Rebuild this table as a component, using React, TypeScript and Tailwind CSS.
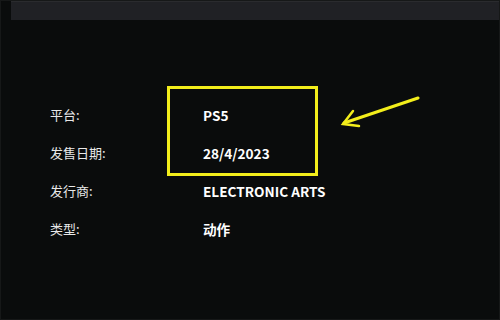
import React from 'react';

const rows = [
  { label: '平台:', value: 'PS5' },
  { label: '发售日期:', value: '28/4/2023' },
  { label: '发行商:', value: 'ELECTRONIC ARTS' },
  { label: '类型:', value: '动作' },
];

export default function App() {
  return (
    <div
      className="relative w-[500px] h-[320px] overflow-hidden bg-[#0a0c0c] border border-[#161818]"
      style={{ fontFamily: '"Noto Sans CJK SC", "Noto Sans", sans-serif' }}
    >
      {/* top bar */}
      <div className="ml-[10px] h-[19px] bg-[#202125] border-t border-[#2a2b2e]" />

      {/* details */}
      <div className="pt-[76px] pl-[49px]">
        {rows.map((r) => (
          <div key={r.label} className="grid grid-cols-[153px_1fr] h-[38px] items-center">
            <span className="text-[13px] leading-5 text-[#e8e8e8]">{r.label}</span>
            <span className="text-[13.6px] leading-5 font-bold text-white">{r.value}</span>
          </div>
        ))}
      </div>

      {/* highlight annotation */}
      <div className="absolute left-[166px] top-[85px] w-[151px] h-[90px] border-[3px] border-[#f3ee1b]" />
      <svg className="absolute left-[330px] top-[88px]" width="100" height="50" viewBox="0 0 100 50">
        <path
          d="M87 9 L13 34"
          stroke="#f3ee1b"
          strokeWidth="3"
          strokeLinecap="round"
          fill="none"
        />
        <path
          d="M22 22 L12 35 L28 37"
          stroke="#f3ee1b"
          strokeWidth="2.5"
          strokeLinecap="round"
          strokeLinejoin="miter"
          fill="none"
        />
      </svg>
    </div>
  );
}
